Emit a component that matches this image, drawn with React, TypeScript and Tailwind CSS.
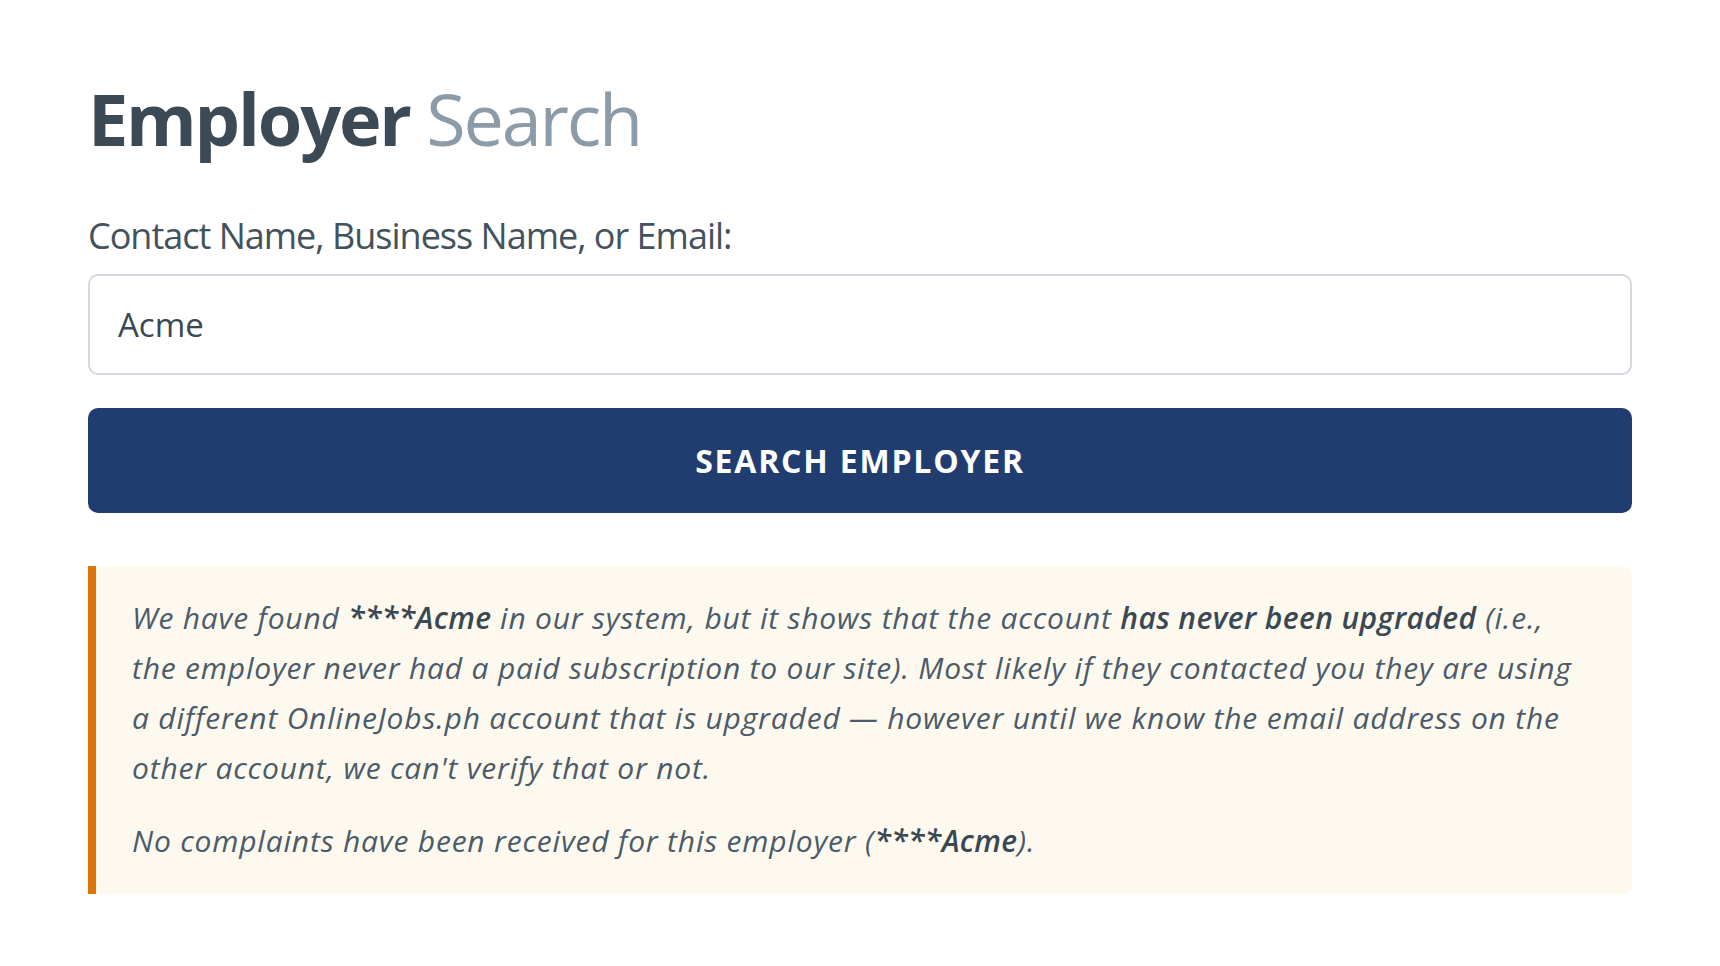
const font = { fontFamily: '"Open Sans", "Noto Sans", sans-serif' };

const App = () => {
  return (
    <div className="min-h-screen bg-white px-[88px] pt-[75px] text-[#44525e]" style={font}>
      <h1 className="text-[72px] leading-[86px] tracking-[-2.2px]">
        <span className="font-bold text-[#3c4a56]">Employer</span>{" "}
        <span className="font-normal text-[#8b9ba8]">Search</span>
      </h1>

      <label className="mt-[50px] block text-[36px] leading-[50px] tracking-[-1px] text-[#44525e]">
        Contact Name, Business Name, or Email:
      </label>
      <input
        className="mt-[13px] block h-[101px] w-full rounded-[10px] border-2 border-[#d3d9df] bg-white px-[28px] text-[33px] text-[#3a4856] outline-none"
        style={font}
        defaultValue="Acme"
      />

      <button
        className="mt-[33px] flex h-[105px] w-full items-center justify-center rounded-[10px] bg-[#213d70] text-[32px] font-bold tracking-[1.8px] text-white"
        style={font}
      >
        SEARCH EMPLOYER
      </button>

      <div className="mt-[53px] rounded-r-[10px] border-l-[8px] border-[#dc7508] bg-[#fdf9ef] pb-[28px] pl-[36px] pr-[40px] pt-[27px] text-[30px] italic leading-[50px] tracking-[0.8px] text-[#4b5b69]">
        <p>
          We have found <span className="font-semibold tracking-[0.4px] text-[#3a4854]">****Acme</span> in our
          system, but it shows that the account{" "}
          <span className="font-semibold tracking-[0.4px] text-[#3a4854]">has never been upgraded</span> (i.e., the
          employer never had a paid subscription to our site). Most likely if they contacted you they are using a
          different OnlineJobs.ph account that is upgraded — however until we know the email address on the other
          account, we can't verify that or not.
        </p>
        <p className="mt-[23px]">
          No complaints have been received for this employer (
          <span className="font-semibold tracking-[0.4px] text-[#3a4854]">****Acme</span>).
        </p>
      </div>
    </div>
  );
};

export default App;
